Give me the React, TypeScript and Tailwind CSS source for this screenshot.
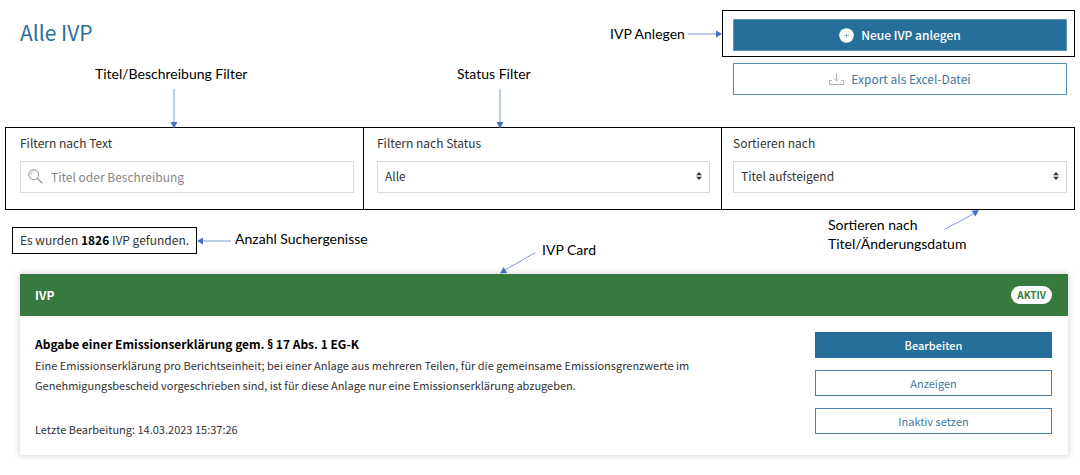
import React from 'react';
import clsx from 'clsx';

type ArrowProps = {
  className?: string;
  direction: 'down' | 'right' | 'left' | 'down-left' | 'up-right';
};

const arrows = {
  down: { width: 8, height: 39, line: 'M4 0V33', head: 'M0.5 33H7.5L4 39.5Z' },
  right: { width: 34, height: 8, line: 'M0 4H28', head: 'M28 0.5V7.5L34 4Z' },
  left: { width: 34, height: 8, line: 'M34 4H6', head: 'M6 0.5V7.5L0 4Z' },
  'down-left': { width: 36, height: 22, line: 'M35.500 0.500L5 18', head: 'M0 21.500L3.500 15L7.300 21Z' },
  'up-right': { width: 36, height: 20, line: 'M0.500 19.500L30 3.500', head: 'M35 0L27.500 0.800L31.500 6.500Z' },
};

const Arrow = ({ direction, className }: ArrowProps) => {
  const a = arrows[direction];
  return (
    <svg
      width={a.width}
      height={a.height}
      viewBox={`0 0 ${a.width} ${a.height}`}
      className={clsx('shrink-0', className)}
      aria-hidden="true"
    >
      <path d={a.line} fill="none" stroke="#4472c4" strokeWidth="0.7" />
      <path d={a.head} fill="#4472c4" />
    </svg>
  );
};

const Note = ({ children, className }: { children: React.ReactNode; className?: string }) => (
  <p className={clsx("font-['Lato',sans-serif] text-[14px] leading-[19px] whitespace-nowrap text-black", className)}>
    {children}
  </p>
);

const PlusIcon = () => (
  <svg width="15" height="15" viewBox="0 0 15 15" aria-hidden="true">
    <circle cx="7.5" cy="7.5" r="7.3" fill="#fff" />
    <path d="M7.500 5V10M5 7.500H10" stroke="#7fa9c6" strokeWidth="0.8" />
  </svg>
);

const DownloadIcon = () => (
  <svg width="15" height="12" viewBox="0 0 15 12" fill="none" stroke="#a3adb5" aria-hidden="true">
    <path d="M3 7.500H0.500V11.500H14.500V7.500H12" strokeWidth="0.9" />
    <path d="M7.500 0V8M5 5.500L7.500 8L10 5.500" strokeWidth="0.9" />
  </svg>
);

const SearchIcon = ({ className }: { className?: string }) => (
  <svg width="15" height="15" viewBox="0 0 15 15" fill="none" stroke="#8c8c8c" className={className} aria-hidden="true">
    <circle cx="5.700" cy="5.700" r="5" />
    <path d="M9.300 9.300L14.300 14.300" strokeWidth="1.2" />
    <path d="M2.800 5.500A2.800 2.800 0 0 1 5.500 2.800" strokeWidth="0.6" />
  </svg>
);

const SortIcon = () => (
  <svg
    width="6"
    height="8"
    viewBox="0 0 6 8"
    fill="#343a40"
    className="pointer-events-none absolute top-[11px] right-2"
    aria-hidden="true"
  >
    <path d="M0 3.200L3 0L6 3.200Z" />
    <path d="M0 4.800L3 8L6 4.800Z" />
  </svg>
);

const SelectField = ({ id, label, options }: { id: string; label: string; options: string[] }) => (
  <>
    <label htmlFor={id} className="block">
      {label}
    </label>
    <div className="relative mt-2">
      <select
        id={id}
        className="block h-8 w-full appearance-none border border-[#d5dde1] bg-white px-[7px] pb-0.5 text-[#333]"
      >
        {options.map((option) => (
          <option key={option}>{option}</option>
        ))}
      </select>
      <SortIcon />
    </div>
  </>
);

const App = () => {
  return (
    <main className="bg-white px-[5px] pt-[10px] pb-5 font-['Noto_Sans_CJK_SC',sans-serif] text-[12px] leading-5 text-[#333]">
      <header className="flex items-start">
        <h1 className="pt-1.5 pl-[15px] text-[21px] leading-8 text-[#2a6f9b]">Alle IVP</h1>
        <div className="ml-auto flex items-center gap-[3px] pt-[14px]">
          <Note>IVP Anlegen</Note>
          <Arrow direction="right" />
        </div>
        <div className="w-[33%]">
          <div className="border border-black pt-2 pr-[7px] pb-[5px] pl-[10px]">
            <button className="flex h-8 w-full items-center justify-center gap-[7px] border border-[#5f97ba] bg-[#276f9b] font-medium text-white">
              <PlusIcon />
              Neue IVP anlegen
            </button>
          </div>
          <div className="pt-[6px] pr-2 pl-[11px]">
            <button className="flex h-8 w-full items-center justify-center gap-[7px] border border-[#5a8fb3] text-[#3f78a1]">
              <DownloadIcon />
              Export als Excel-Datei
            </button>
          </div>
        </div>
      </header>

      <section className="mt-8 grid grid-cols-[358fr_358fr_352fr] border border-black">
        <div className="relative h-[81px] border-r border-black pt-[5px] pr-[9px] pl-[14px]">
          <Note className="absolute bottom-[126px] left-[89px]">Titel/Beschreibung Filter</Note>
          <Arrow direction="down" className="absolute bottom-full left-[164px]" />
          <label htmlFor="text-filter" className="block">
            Filtern nach Text
          </label>
          <div className="relative mt-2">
            <SearchIcon className="absolute top-2 left-2" />
            <input
              id="text-filter"
              type="text"
              placeholder="Titel oder Beschreibung"
              className="block h-8 w-full border border-[#d5dde1] pr-2 pb-0.5 pl-[30px] placeholder:text-[#868686]"
            />
          </div>
        </div>
        <div className="relative border-r border-black pt-[5px] pr-[11px] pl-[13px]">
          <Note className="absolute bottom-[126px] left-[93px]">Status Filter</Note>
          <Arrow direction="down" className="absolute bottom-full left-[132px]" />
          <SelectField id="status-filter" label="Filtern nach Status" options={['Alle', 'Aktiv', 'Inaktiv']} />
        </div>
        <div className="relative pt-[5px] pr-[7px] pl-[11px]">
          <SelectField id="sort-by" label="Sortieren nach" options={['Titel aufsteigend', 'Titel absteigend']} />
          <Note className="absolute top-[87px] left-[106px]">
            Sortieren nach
            <br />
            Titel/Änderungsdatum
          </Note>
          <Arrow direction="up-right" className="absolute top-[82px] left-[222px]" />
        </div>
      </section>

      <div className="mt-[17px] flex items-center pl-[7px]">
        <p className="border border-black px-[7px] pt-0.5 pb-[3px]">
          Es wurden <strong className="text-black">1826</strong> IVP gefunden.
        </p>
        <Arrow direction="left" />
        <Note className="pb-1 pl-1">Anzahl Suchergenisse</Note>
      </div>

      <article className="relative mt-5 mr-[7px] ml-[15px] shadow-[0_0_7px_rgba(0,0,0,0.2)]">
        <Note className="absolute bottom-[196px] left-[522px]">IVP Card</Note>
        <Arrow direction="down-left" className="absolute bottom-full left-[480px]" />
        <div className="flex h-[42px] items-center justify-between bg-[#37793e] pr-4 pl-[15px] text-[12px] font-bold text-white">
          <span>IVP</span>
          <span className="rounded-full bg-white px-[6px] text-[10px] leading-[18px] text-[#37793e]">AKTIV</span>
        </div>
        <div className="flex justify-between bg-white pt-4 pr-4 pb-4 pl-[15px] text-[11px]">
          <div className="max-w-[660px]">
            <h2 className="pt-0.5 text-[12px] font-bold text-black">
              Abgabe einer Emissionserklärung gem. <span className="font-['Open_Sans',sans-serif]">§</span> 17 Abs. 1
              EG-K
            </h2>
            <p>
              Eine Emissionserklärung pro Berichtseinheit; bei einer Anlage aus mehreren Teilen, für die gemeinsame
              Emissionsgrenzwerte im Genehmigungsbescheid vorgeschrieben sind, ist für diese Anlage nur eine
              Emissionserklärung abzugeben.
            </p>
            <p className="mt-6">Letzte Bearbeitung: 14.03.2023 15:37:26</p>
          </div>
          <div className="flex w-[237px] shrink-0 flex-col gap-3">
            <button className="h-[26px] border border-[#276f9b] bg-[#276f9b] font-medium text-white">Bearbeiten</button>
            <button className="h-[26px] border border-[#4a84ad] text-[#3f78a1]">Anzeigen</button>
            <button className="h-[26px] border border-[#4a84ad] text-[#3f78a1]">Inaktiv setzen</button>
          </div>
        </div>
      </article>
    </main>
  );
};

export default App;
